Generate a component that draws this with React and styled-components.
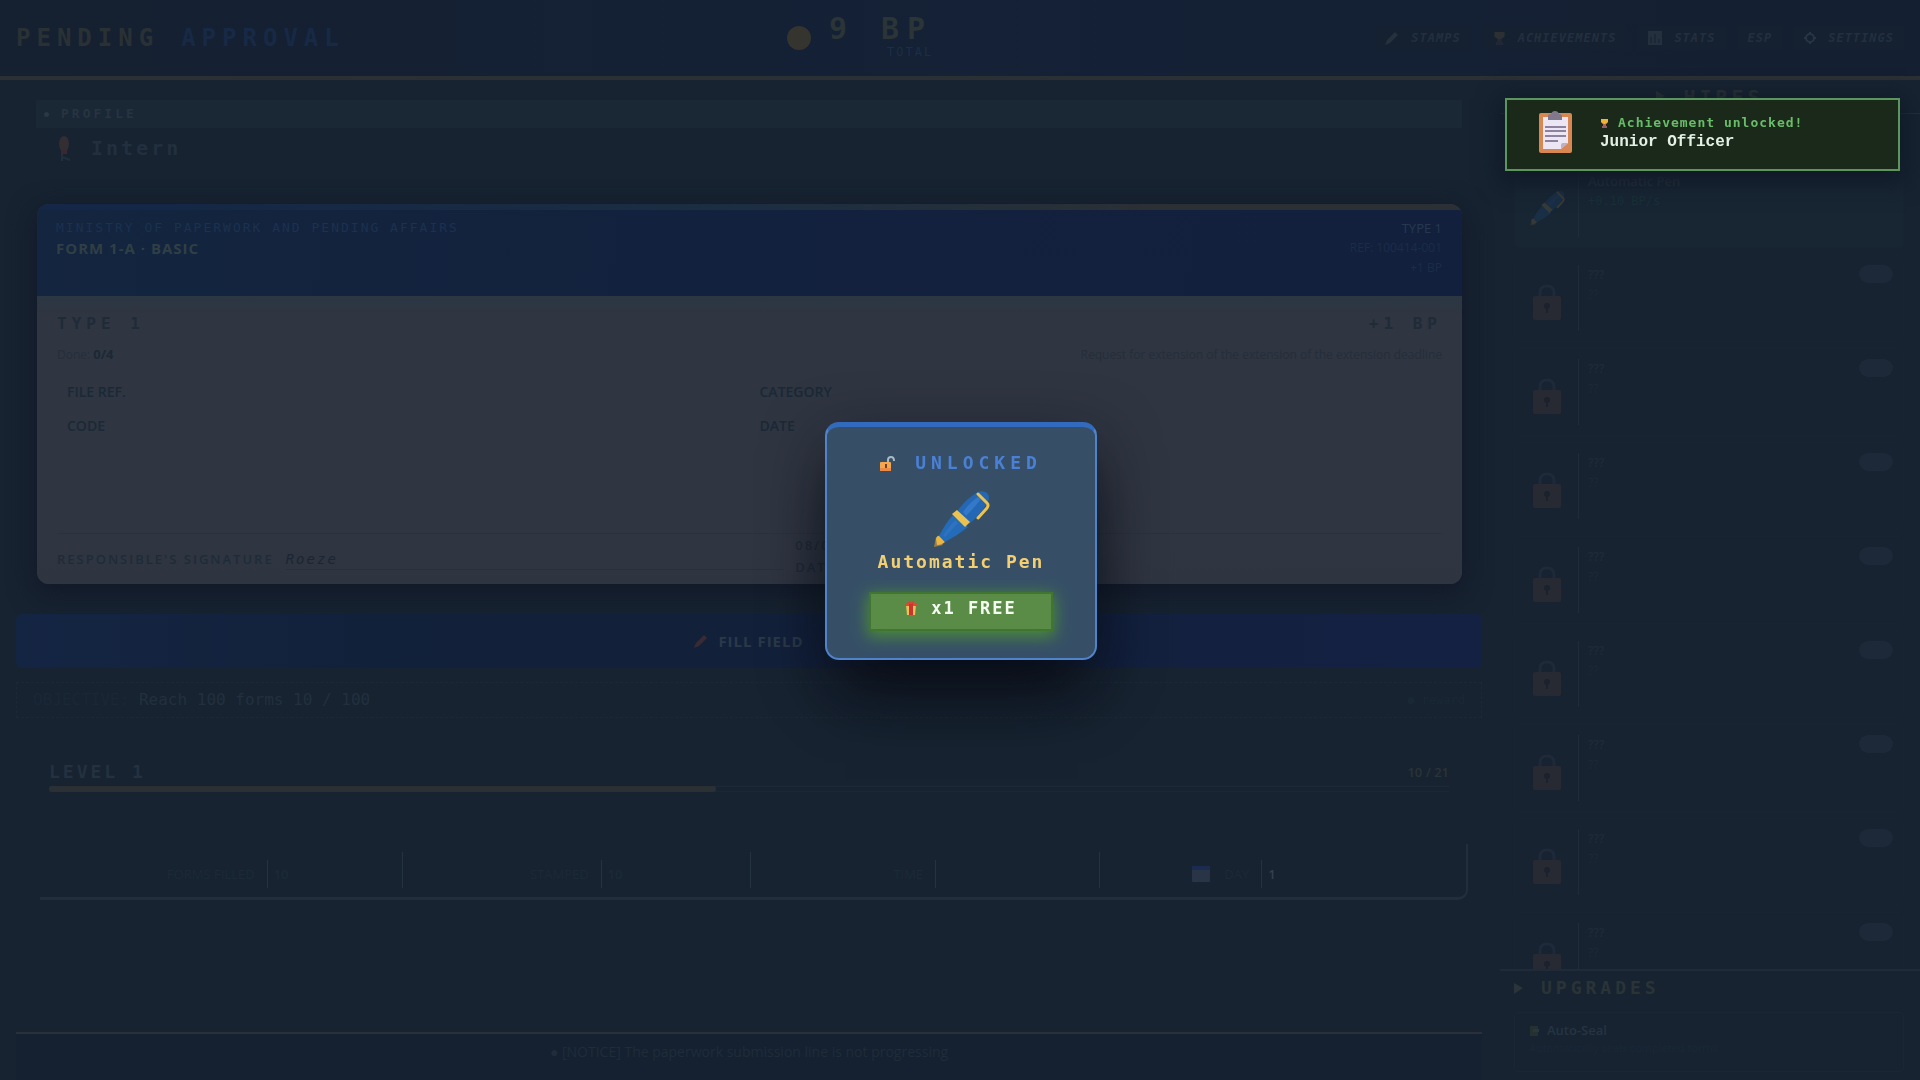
import React from 'react';
import styled, { createGlobalStyle } from 'styled-components';

const mono = '"DejaVu Sans Mono", "Liberation Mono", monospace';
const sans = '"Open Sans", "Noto Sans", sans-serif';

const GlobalStyle = createGlobalStyle`
  * {
    box-sizing: border-box;
  }

  body {
    margin: 0;
    background: #172331;
    color: #283543;
    font-family: ${sans};
    overflow: hidden;
  }

  button {
    font: inherit;
    border: 0;
    cursor: pointer;
  }
`;

const Page = styled.div`
  display: flex;
  flex-direction: column;
  height: 100vh;
`;

const Header = styled.header`
  display: flex;
  justify-content: space-between;
  align-items: center;
  height: 80px;
  flex: none;
  padding: 0 16px;
  background: linear-gradient(90deg, #152030, #142136 50%, #141f31);
  border-bottom: 4px solid #2b3034;
`;

const Logo = styled.h1`
  display: flex;
  gap: 22px;
  margin: 0;
  color: #2a3135;
  font: bold 24px/32px ${mono};
  letter-spacing: 6px;
`;

const LogoAccent = styled.span`
  color: #172945;
`;

const Score = styled.div`
  display: flex;
  align-items: center;
  gap: 18px;
`;

const Coin = styled.span`
  width: 24px;
  height: 24px;
  border-radius: 50%;
  background: #35342f;
`;

const ScoreText = styled.div`
  display: flex;
  flex-direction: column;
  align-items: flex-end;
  padding-bottom: 4px;
  color: #2b3436;
  font: bold 30px/32px ${mono};
  letter-spacing: 8px;
`;

const ScoreNote = styled.small`
  color: #1c2e45;
  font: 12px/14px ${mono};
  letter-spacing: 2px;
`;

const Nav = styled.nav`
  display: flex;
  justify-content: flex-end;
  gap: 12px;
`;

const NavButton = styled.button`
  display: flex;
  align-items: center;
  gap: 12px;
  height: 24px;
  padding: 0 10px;
  color: #232f3e;
  background: #152131;
  && {
    font: italic bold 12px/16px ${mono};
    letter-spacing: 1px;
  }
`;

const Content = styled.div`
  display: flex;
  flex: 1;
  min-height: 0;
`;

const Main = styled.main`
  display: flex;
  flex-direction: column;
  flex: 1;
  min-width: 0;
  padding: 20px 18px 0 16px;
`;

const Profile = styled.section`
  padding: 0 20px;
`;

const ProfileTitle = styled.h2`
  display: flex;
  align-items: center;
  gap: 12px;
  height: 28px;
  margin: 0;
  padding: 0 8px;
  background: #1a2735;
  color: #273442;
  font: bold 13px/16px ${mono};
  letter-spacing: 3px;
`;

const Rank = styled.div`
  display: flex;
  align-items: center;
  gap: 20px;
  height: 40px;
  padding: 0 22px;
  color: #222f3e;
  font: bold 20px/24px ${mono};
  letter-spacing: 3px;
`;

const FormCard = styled.article`
  display: flex;
  flex-direction: column;
  margin: 36px 20px 30px 21px;
  border-radius: 12px;
  background: #2e3440;
  box-shadow: 0 8px 24px 4px #131a29;
  overflow: hidden;
`;

const FormStripe = styled.div`
  height: 6px;
  background: linear-gradient(90deg, #142746 10%, #1c2e41 50%, #2b3034 80%);
`;

const FormHeader = styled.header`
  display: flex;
  justify-content: space-between;
  height: 86px;
  padding: 8px 20px 8px 19px;
  background: linear-gradient(100deg, #14253f, #12213d 50%, #13203d);
`;

const Ministry = styled.div`
  color: #1b3150;
  font: 13px/20px ${mono};
  letter-spacing: 2px;
`;

const FormName = styled.h2`
  margin: 0;
  color: #303f45;
  font: bold 15px/20px ${sans};
  letter-spacing: 1px;
`;

const FormMeta = styled.div`
  display: flex;
  flex-direction: column;
  align-items: flex-end;
  color: #1a2c48;
  font: 12px/20px ${sans};
`;

const MetaType = styled.span`
  color: #263850;
  font-size: 13px;
`;

const FormBody = styled.div`
  display: flex;
  flex-direction: column;
  min-height: 288px;
  padding: 18px 20px 6px;
  background: linear-gradient(#2b3743, #2f3541 18px, #2f3541 250px, #2e3440);
`;

const Split = styled.div`
  display: flex;
  justify-content: space-between;
  align-items: center;
`;

const FormType = styled.strong`
  color: #1f2b38;
  font: bold 16px/20px ${mono};
  letter-spacing: 5px;
`;

const Hint = styled.p`
  margin: 0;
  padding: 10px 0;
  color: #252e3b;
  font: 12px/20px ${sans};
`;

const Done = styled.b`
  color: #1c2835;
  font-size: 13px;
`;

const Fields = styled.div`
  display: grid;
  grid-template-columns: 1fr 1fr;
  column-gap: 20px;
  padding: 0 10px;
`;

const Field = styled.div`
  color: #1a2937;
  font: 600 14px/34px ${sans};
`;

const Signature = styled.div`
  display: flex;
  align-items: center;
  gap: 12px;
  margin-top: auto;
  border-top: 1px solid #2b323e;
  color: #1e2c39;
  font: 600 13px/20px ${sans};
  letter-spacing: 2px;
`;

const SignatureLabel = styled.span`
  padding-top: 6px;
`;

const SignatureName = styled.em`
  flex: 10;
  padding-top: 6px;
  border-bottom: 1px solid #29303c;
  color: #1c2632;
  font: italic 14px/20px ${mono};
`;

const Approval = styled.div`
  flex: 13;
  display: flex;
  flex-direction: column;
  color: #202b37;
  line-height: 22px;
`;

const FillButton = styled.button`
  display: flex;
  justify-content: center;
  align-items: center;
  gap: 10px;
  height: 54px;
  flex: none;
  border-radius: 6px;
  background: linear-gradient(90deg, #142543, #12213a 25%, #12203b 60%, #142143);
  color: #2a3949;
  && {
    font: bold 15px/20px ${sans};
    letter-spacing: 1px;
  }
`;

const Goal = styled.div`
  display: flex;
  align-items: center;
  justify-content: space-between;
  height: 36px;
  margin-top: 14px;
  padding: 0 16px;
  border: 1px dashed #1b2937;
  color: #1a2735;
  font: 16px/20px ${mono};
`;

const GoalText = styled.span`
  color: #22303d;
`;

const Reward = styled.span`
  font-size: 12px;
`;

const Level = styled.section`
  margin: 42px 33px 0 33px;
`;

const LevelName = styled.strong`
  color: #243140;
  font: bold 18px/24px ${mono};
  letter-spacing: 3px;
`;

const LevelCount = styled.span`
  color: #2a3337;
  font: 600 13px/24px ${sans};
`;

const Track = styled.div`
  height: 6px;
  margin-top: 2px;
  border-top: 1px solid #1d2936;
  border-bottom: 1px solid #1b2734;
`;

const Fill = styled.div`
  height: 6px;
  margin-top: -1px;
  border-radius: 3px;
  background: #2b3034;
`;

const Stats = styled.dl`
  display: grid;
  grid-template-columns: repeat(4, 1fr);
  margin: 52px 14px 0 24px;
  padding: 8px 18px 9px 14px;
  border-bottom: 3px solid #232e3c;
  border-right: 2px solid #232e3c;
  border-radius: 0 0 10px 0;
`;

const Stat = styled.div`
  display: flex;
  justify-content: center;
  align-items: flex-end;
  height: 36px;
  border-right: 1px solid ${({ $last }) => ($last ? 'transparent' : '#253240')};
  color: #1c2937;
  font: 13px/28px ${sans};
`;

const StatLabel = styled.dt`
  display: flex;
  align-items: center;
  gap: 14px;
  padding-right: 12px;
  border-right: 1px solid #253240;
`;

const StatValue = styled.dd`
  min-width: ${({ $strong }) => ($strong ? 92 : 20)}px;
  margin: 0;
  padding-left: 6px;
  color: ${({ $strong }) => ($strong ? '#334050' : '#1c2937')};
  font-weight: 600;
`;

const Footer = styled.footer`
  height: 48px;
  margin-top: auto;
  padding-top: 8px;
  border-top: 2px solid #29303a;
  background: #152131;
  color: #1f2c39;
  font: 14px/20px ${sans};
  text-align: center;
`;

const Sidebar = styled.aside`
  display: flex;
  flex-direction: column;
  width: 420px;
  flex: none;
`;

const SideTitle = styled.h2`
  display: flex;
  align-items: center;
  justify-content: ${({ $center }) => ($center ? 'center' : 'flex-start')};
  gap: 18px;
  height: 34px;
  flex: none;
  margin: 0;
  padding: 0 14px;
  border-bottom: ${({ $center }) => ($center ? '1px solid #2a2f36' : '0')};
  color: #2a3336;
  font: bold ${({ $center }) => ($center ? 20 : 18)}px/28px ${mono};
  letter-spacing: 4px;
`;

const HireList = styled.div`
  display: flex;
  flex-direction: column;
  flex: 1;
  gap: 6px;
  min-height: 0;
  padding: 46px 16px 0 14px;
  border-bottom: 2px solid #1f2b3a;
  overflow: hidden;
`;

const Hire = styled.div`
  display: flex;
  flex: none;
  height: 88px;
  padding: 10px 10px 10px 0;
  border: 1px solid #182432;
  border-radius: 4px;
  background: ${({ $open }) => ($open ? '#182533' : '#172331')};
`;

const HireIcon = styled.div`
  display: flex;
  justify-content: center;
  align-items: center;
  width: 64px;
  padding-top: 8px;
  border-right: 1px solid #1f2c3a;
`;

const HireInfo = styled.div`
  flex: 1;
  padding-left: 9px;
  color: #1c2937;
  font: 12px/20px ${sans};
`;

const HireName = styled.div`
  color: ${({ $open }) => ($open ? '#273441' : '#1e2b39')};
  font-size: ${({ $open }) => ($open ? 13 : 12)}px;
  font-weight: 600;
`;

const HireRate = styled.div`
  color: #193037;
  font-family: ${mono};
`;

const Pill = styled.span`
  width: 34px;
  height: 18px;
  border-radius: 9px;
  background: #1d2938;
`;

const Upgrade = styled.div`
  height: 60px;
  margin: 7px 16px 8px 14px;
  padding: 8px 14px;
  border: 1px solid #192634;
  border-radius: 4px;
  color: #1a2736;
  font: 11px/18px ${sans};
`;

const UpgradeName = styled.div`
  display: flex;
  align-items: center;
  gap: 8px;
  color: #263442;
  font-size: 13px;
  font-weight: 600;
`;

const Toast = styled.div`
  position: fixed;
  top: 98px;
  right: 20px;
  display: flex;
  align-items: flex-start;
  gap: 28px;
  width: 395px;
  height: 73px;
  padding: 11px 32px;
  border: 2px solid #5c965f;
  background: #1a2919;
  box-shadow: 0 6px 20px 6px #111a28;
`;

const ToastTitle = styled.div`
  display: flex;
  align-items: center;
  gap: 9px;
  padding-top: 2px;
  color: #69bd69;
  font: bold 13px/20px ${mono};
  letter-spacing: 1px;
`;

const ToastName = styled.div`
  color: #e4efe6;
  font: bold 16px/18px "Liberation Mono", monospace;
`;

const Overlay = styled.div`
  position: fixed;
  inset: 0;
  display: flex;
  justify-content: center;
  align-items: center;
  padding: 2px 0 0 2px;
`;

const Modal = styled.div`
  display: flex;
  flex-direction: column;
  align-items: center;
  width: 272px;
  height: 238px;
  padding: 25px 20px;
  border: 2px solid #4f84cc;
  border-top: 5px solid #326bbd;
  border-radius: 14px;
  background: #364f67;
  box-shadow: 0 20px 60px rgba(8, 10, 18, 0.5), 0 50px 60px -20px #0c111b;
`;

const ModalTitle = styled.h2`
  display: flex;
  align-items: center;
  gap: 20px;
  margin: 0;
  color: #4a80d6;
  font: bold 18px/22px ${mono};
  letter-spacing: 5px;
`;

const PenWrap = styled.div`
  height: 76px;
  padding-top: 16px;
`;

const ModalName = styled.div`
  color: #f3cf72;
  font: bold 18px/24px ${mono};
  letter-spacing: 2px;
`;

const FreeButton = styled.button`
  display: flex;
  justify-content: center;
  align-items: center;
  gap: 14px;
  width: 184px;
  height: 39px;
  margin-top: 18px;
  padding-bottom: 8px;
  background: #5a8c48;
  color: #f4fbf1;
  box-shadow: 0 4px 16px 2px #4c8a3c;
  && {
    border: 2px solid #407532;
    font: bold 17px/22px ${mono};
    letter-spacing: 2px;
  }
`;

const PenIcon = ({ size, opacity = 1 }) => (
  <svg width={size} height={size} viewBox="0 0 58 58" opacity={opacity} aria-hidden="true">
    <path d="M2 57 L4 47 L11 55 Z" fill="#9b7b4a" />
    <path d="M4 49 Q5 45 8 46 L13 52 Q10 55 5 55 Z" fill="#eab543" />
    <path d="M7 46 Q13 34 21 25 L36 37 Q25 46 13 52 Z" fill="#246bb8" />
    <path d="M26 20 Q35 8 46 2 Q51 0 55 3 Q59 7 55 13 Q49 24 37 34 Z" fill="#2468b5" />
    <path d="M31 22 Q38 12 46 7 L49 9 Q42 18 34 26 Z" fill="#3379c7" />
    <path d="M11 45 Q17 37 23 30 L26 33 Q19 41 13 47 Z" fill="#2f72bf" />
    <path d="M20 24 L25 20 L38 32 L33 37 Z" fill="#ebc250" />
    <path d="M46 4 L55 13 Q57 15 55 18 L46 28" fill="none" stroke="#edc24f" strokeWidth="3" strokeLinecap="round" />
  </svg>
);

const LockIcon = ({ open }) => (
  <svg width={open ? 15 : 28} height={open ? 15 : 36} viewBox={open ? '0 0 15 15' : '0 0 28 36'} aria-hidden="true">
    {open ? (
      <>
        <path d="M8 6 V4 Q8 1 11 1 Q14 1 14 5" fill="none" stroke="#a9bac4" strokeWidth="2" />
        <rect x="0" y="6" width="11" height="9" rx="1" fill="#f6a64d" />
        <path d="M0 12 H11 V14 Q11 15 10 15 H1 Q0 15 0 14 Z" fill="#ed8a46" />
        <path d="M5 8 H7 V12 H5 Z" fill="#6d4232" />
      </>
    ) : (
      <>
        <path d="M7 14 V9 Q7 2 14 2 Q21 2 21 9 V14" fill="none" stroke="#1e2a39" strokeWidth="3" />
        <rect x="0" y="12" width="28" height="24" rx="2" fill="#272a33" />
        <circle cx="14" cy="22" r="3" fill="#1b222d" />
        <path d="M13 22 H15 V29 H13 Z" fill="#1b222d" />
      </>
    )}
  </svg>
);

const ClipboardIcon = () => (
  <svg width="33" height="42" viewBox="0 0 33 42" aria-hidden="true">
    <rect x="0" y="2" width="33" height="40" rx="2" fill="#d88652" />
    <path d="M4 6 H29 V32 L22 38 H4 Z" fill="#ece6f4" />
    <path d="M22 38 V34 Q22 32 24 32 H29 Z" fill="#bcafc9" />
    <path d="M9 9 V5 Q9 3 12 3 Q13 0 16 0 Q19 0 20 3 Q23 3 23 5 V9 Z" fill="#80788d" />
    <path d="M6 16 H27 M6 20 H27 M6 25 H27 M6 30 H19" stroke="#8e839f" strokeWidth="2" />
  </svg>
);

const TrophyIcon = ({ size = 9, dim }) => (
  <svg width={size} height={size} viewBox="0 0 9 9" opacity={dim ? 0.1 : 1} aria-hidden="true">
    <path d="M1 0 H8 V3 Q7 5 5 5 V7 H4 V5 Q2 5 1 3 Z" fill="#f0b43c" />
    <path d="M3 5 H6 V7 H3 Z" fill="#c65b35" />
    <path d="M2 7 H7 V9 H2 Z" fill="#93606a" />
  </svg>
);

const GiftIcon = () => (
  <svg width="12" height="14" viewBox="0 0 12 14" aria-hidden="true">
    <path d="M1 4 H11 L10 14 H2 Z" fill="#f0bf55" />
    <path d="M0 2 H12 V5 H0 Z" fill="#d94b35" />
    <path d="M4 2 H8 V14 H4 Z" fill="#c93430" />
    <path d="M2 1 L5 0 L6 2 L8 0 L10 1 L7 3 H4 Z" fill="#e0402f" />
  </svg>
);

const PencilIcon = ({ color = '#25313d' }) => (
  <svg width="14" height="14" viewBox="0 0 14 14" aria-hidden="true">
    <path d="M0 14 L2 9 L10 1 L13 4 L5 12 Z" fill={color} />
  </svg>
);

const ChartIcon = () => (
  <svg width="14" height="14" viewBox="0 0 14 14" aria-hidden="true">
    <rect width="14" height="14" fill="#24303d" />
    <path d="M3 12 V6 M7 12 V3 M11 12 V8" stroke="#1b2836" strokeWidth="2" />
  </svg>
);

const StampIcon = () => (
  <svg width="10" height="12" viewBox="0 0 10 12" aria-hidden="true">
    <path d="M1 2 H9 V12 H1 Z" fill="#24312f" />
    <path d="M4 5 H10 V8 H4 Z" fill="#2a3540" />
  </svg>
);

const GearIcon = () => (
  <svg width="12" height="12" viewBox="0 0 12 12" aria-hidden="true">
    <circle cx="6" cy="6" r="4" fill="none" stroke="#273442" strokeWidth="2" />
    <path d="M6 0 V2 M6 10 V12 M0 6 H2 M10 6 H12" stroke="#273442" strokeWidth="2" />
  </svg>
);

const PinIcon = () => (
  <svg width="13" height="25" viewBox="0 0 13 25" aria-hidden="true">
    <ellipse cx="6" cy="8" rx="5" ry="8" fill="#332e32" />
    <path d="M3 14 H9 V18 H3 Z" fill="#39292e" />
    <path d="M4 18 V25 M4 21 L12 24" stroke="#222e3c" strokeWidth="2" />
  </svg>
);

const CalendarIcon = () => (
  <svg width="18" height="16" viewBox="0 0 18 16" aria-hidden="true">
    <rect width="18" height="16" rx="1" fill="#293446" />
    <rect width="18" height="4" fill="#1b2c50" />
  </svg>
);

const Arrow = () => (
  <svg width="9" height="11" viewBox="0 0 9 11" aria-hidden="true">
    <path d="M0 0 L9 5 L0 11 Z" fill="#2a3439" />
  </svg>
);

const Dot = styled.span`
  width: 5px;
  height: 5px;
  border-radius: 50%;
  background: #2a3746;
`;

const lockedHires = [1, 2, 3, 4, 5, 6, 7, 8];
const level = { done: 10, total: 21 };

const App = () => (
  <>
    <GlobalStyle />
    <Page>
      <Header>
        <Logo>
          PENDING
          <LogoAccent>APPROVAL</LogoAccent>
        </Logo>
        <Score>
          <Coin />
          <ScoreText>
            9 BP
            <ScoreNote>TOTAL</ScoreNote>
          </ScoreText>
        </Score>
        <Nav>
          <NavButton>
            <PencilIcon />
            STAMPS
          </NavButton>
          <NavButton>
            <TrophyIcon size={13} dim />
            ACHIEVEMENTS
          </NavButton>
          <NavButton>
            <ChartIcon />
            STATS
          </NavButton>
          <NavButton>ESP</NavButton>
          <NavButton>
            <GearIcon />
            SETTINGS
          </NavButton>
        </Nav>
      </Header>
      <Content>
        <Main>
          <Profile>
            <ProfileTitle>
              <Dot />
              PROFILE
            </ProfileTitle>
            <Rank>
              <PinIcon />
              Intern
            </Rank>
          </Profile>
          <FormCard>
            <FormStripe />
            <FormHeader>
              <div>
                <Ministry>MINISTRY OF PAPERWORK AND PENDING AFFAIRS</Ministry>
                <FormName>FORM 1-A · BASIC</FormName>
              </div>
              <FormMeta>
                <MetaType>TYPE 1</MetaType>
                <span>REF: 100414-001</span>
                <span>+1 BP</span>
              </FormMeta>
            </FormHeader>
            <FormBody>
              <Split>
                <FormType>TYPE 1</FormType>
                <FormType>+1 BP</FormType>
              </Split>
              <Split>
                <Hint>
                  {'Done: '}
                  <Done>0/4</Done>
                </Hint>
                <Hint>Request for extension of the extension of the extension deadline</Hint>
              </Split>
              <Fields>
                <Field>FILE REF.</Field>
                <Field>CATEGORY</Field>
                <Field>CODE</Field>
                <Field>DATE</Field>
              </Fields>
              <Signature>
                <SignatureLabel>RESPONSIBLE&apos;S SIGNATURE</SignatureLabel>
                <SignatureName>Roeze</SignatureName>
                <Approval>
                  <span>08/04</span>
                  <span>DATE</span>
                </Approval>
              </Signature>
            </FormBody>
          </FormCard>
          <FillButton>
            <PencilIcon color="#3a2b33" />
            FILL FIELD
          </FillButton>
          <Goal>
            <span>
              {'OBJECTIVE: '}
              <GoalText>Reach 100 forms 10 / 100</GoalText>
            </span>
            <Reward>● reward</Reward>
          </Goal>
          <Level>
            <Split>
              <LevelName>LEVEL 1</LevelName>
              <LevelCount>{`${level.done} / ${level.total}`}</LevelCount>
            </Split>
            <Track>
              <Fill style={{ width: `${(level.done / level.total) * 100}%` }} />
            </Track>
          </Level>
          <Stats>
            <Stat>
              <StatLabel>FORMS FILLED</StatLabel>
              <StatValue>10</StatValue>
            </Stat>
            <Stat>
              <StatLabel>STAMPED</StatLabel>
              <StatValue>10</StatValue>
            </Stat>
            <Stat>
              <StatLabel>TIME</StatLabel>
              <StatValue />
            </Stat>
            <Stat $last>
              <StatLabel>
                <CalendarIcon />
                DAY
              </StatLabel>
              <StatValue $strong>1</StatValue>
            </Stat>
          </Stats>
          <Footer>● [NOTICE] The paperwork submission line is not progressing</Footer>
        </Main>
        <Sidebar>
          <SideTitle $center>
            <Arrow />
            HIRES
          </SideTitle>
          <HireList>
            <Hire $open>
              <HireIcon>
                <PenIcon size={36} opacity={0.14} />
              </HireIcon>
              <HireInfo>
                <HireName $open>Automatic Pen</HireName>
                <HireRate>+0.10 BP/s</HireRate>
              </HireInfo>
            </Hire>
            {lockedHires.map(id => (
              <Hire key={id}>
                <HireIcon>
                  <LockIcon />
                </HireIcon>
                <HireInfo>
                  <HireName>???</HireName>
                  <div>??</div>
                </HireInfo>
                <Pill />
              </Hire>
            ))}
          </HireList>
          <SideTitle>
            <Arrow />
            UPGRADES
          </SideTitle>
          <Upgrade>
            <UpgradeName>
              <StampIcon />
              Auto-Seal
            </UpgradeName>
            Automatically seals completed forms
          </Upgrade>
        </Sidebar>
      </Content>
    </Page>
    <Overlay>
      <Modal role="dialog" aria-label="Unlocked">
        <ModalTitle>
          <LockIcon open />
          UNLOCKED
        </ModalTitle>
        <PenWrap>
          <PenIcon size={58} />
        </PenWrap>
        <ModalName>Automatic Pen</ModalName>
        <FreeButton>
          <GiftIcon />
          x1 FREE
        </FreeButton>
      </Modal>
    </Overlay>
    <Toast role="status">
      <ClipboardIcon />
      <div>
        <ToastTitle>
          <TrophyIcon />
          Achievement unlocked!
        </ToastTitle>
        <ToastName>Junior Officer</ToastName>
      </div>
    </Toast>
  </>
);

export default App;
